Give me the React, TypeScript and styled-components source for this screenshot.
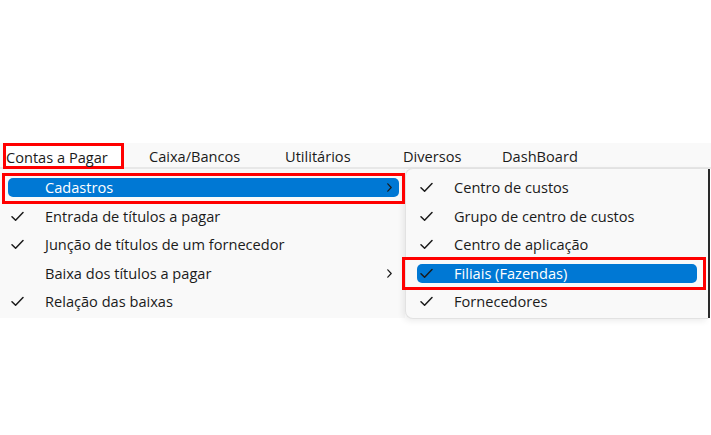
import React from 'react';
import styled, { createGlobalStyle } from 'styled-components';

const GlobalStyle = createGlobalStyle`
  html, body {
    margin: 0;
    padding: 0;
    background: #ffffff;
  }
  body {
    font-family: 'Open Sans', 'Noto Sans', 'Liberation Sans', sans-serif;
    font-size: 14.6px;
    color: #1b1b1b;
  }
`;

const Page = styled.div`
  width: 711px;
  height: 435px;
  padding-top: 143px;
  box-sizing: border-box;
  overflow: hidden;
`;

const MenuBar = styled.div`
  display: flex;
  align-items: stretch;
  height: 24px;
  padding-left: 3px;
  background: #f9f9f9;
  border-bottom: 2px solid #e8e8e8;
`;

const BarItem = styled.div<{ $w?: number; $pl?: number; $marked?: boolean }>`
  display: flex;
  align-items: center;
  box-sizing: border-box;
  width: ${(p) => (p.$w ? `${p.$w}px` : 'auto')};
  padding-left: ${(p) => p.$pl ?? 0}px;
  padding-top: 1px;
  height: ${(p) => (p.$marked ? '26px' : '24px')};
  border: ${(p) => (p.$marked ? '3px solid #ff0000' : 'none')};
  background: ${(p) => (p.$marked ? '#ffffff' : 'transparent')};
  white-space: nowrap;
  font-size: 14.6px;
`;

const DropRow = styled.div`
  display: flex;
  align-items: flex-start;
  border-right: 2px solid #2b2b2b;
  height: 149px;
  box-sizing: border-box;
  margin-right: 1px;
`;

const Menu = styled.div`
  display: flex;
  flex-direction: column;
  width: 405px;
  box-sizing: border-box;
  padding: 4.25px 6px 2px 8px;
  background: #f9f9f9;
`;

const SubMenu = styled.div`
  position: relative;
  z-index: 2;
  display: flex;
  flex-direction: column;
  width: 303px;
  margin-top: -1px;
  box-sizing: border-box;
  padding: 4.25px 11px 2px 11px;
  background: #f9f9f9;
  border: 1px solid #e2e2e2;
  border-right: none;
  border-radius: 8px 0 0 8px;
  box-shadow: -2px 2px 6px rgba(0, 0, 0, 0.08);
`;

const Item = styled.div<{ $active?: boolean }>`
  position: relative;
  display: flex;
  align-items: center;
  flex: none;
  height: 19px;
  margin: 4.75px 0;
  border-radius: 5px;
  background: ${(p) => (p.$active ? '#0078d4' : 'transparent')};
  color: ${(p) => (p.$active ? '#ffffff' : '#1b1b1b')};
  white-space: nowrap;
`;

const Mark = styled.span<{ $t: number; $r: number; $b: number; $l: number }>`
  position: absolute;
  top: ${(p) => p.$t}px;
  right: ${(p) => p.$r}px;
  bottom: ${(p) => p.$b}px;
  left: ${(p) => p.$l}px;
  border: 3px solid #ff0000;
  pointer-events: none;
  z-index: 3;
`;

const CheckSlot = styled.span`
  display: flex;
  align-items: center;
  width: 37px;
  padding-left: 3px;
  box-sizing: border-box;
  color: #1b1b1b;
`;

const Label = styled.span`
  flex: 1;
  line-height: 19px;
`;

const Chevron = styled.span`
  display: flex;
  align-items: center;
  padding-right: 7px;
`;

const Check = () => (
  <svg width="13" height="11" viewBox="0 0 13 11" fill="none">
    <path d="M1 5.8 L4.6 9.3 L12 1.6" stroke="currentColor" strokeWidth="1.5" strokeLinecap="round" strokeLinejoin="round" />
  </svg>
);

const Arrow = () => (
  <svg width="5" height="9" viewBox="0 0 5 9" fill="none">
    <path d="M0.8 0.8 L4.2 4.5 L0.8 8.2" stroke="#1b1b1b" strokeWidth="1.2" strokeLinecap="round" strokeLinejoin="round" />
  </svg>
);

type Entry = {
  label: string;
  checked?: boolean;
  sub?: boolean;
  active?: boolean;
  mark?: [number, number, number, number];
};

const mainItems: Entry[] = [
  { label: 'Cadastros', sub: true, active: true, mark: [-5, -6, -7, -6] },
  { label: 'Entrada de títulos a pagar', checked: true },
  { label: 'Junção de títulos de um fornecedor', checked: true },
  { label: 'Baixa dos títulos a pagar', sub: true },
  { label: 'Relação das baixas', checked: true },
];

const subItems: Entry[] = [
  { label: 'Centro de custos', checked: true },
  { label: 'Grupo de centro de custos', checked: true },
  { label: 'Centro de aplicação', checked: true },
  { label: 'Filiais (Fazendas)', checked: true, active: true, mark: [-7, -9, -7, -15] },
  { label: 'Fornecedores', checked: true },
];

const MenuEntry = ({ entry }: { entry: Entry }) => (
  <Item $active={entry.active}>
    {entry.mark && (
      <Mark $t={entry.mark[0]} $r={entry.mark[1]} $b={entry.mark[2]} $l={entry.mark[3]} />
    )}
    <CheckSlot>{entry.checked && <Check />}</CheckSlot>
    <Label>{entry.label}</Label>
    {entry.sub && (
      <Chevron>
        <Arrow />
      </Chevron>
    )}
  </Item>
);

const App: React.FC = () => {
  return (
    <Page>
      <GlobalStyle />
      <MenuBar>
        <BarItem $w={121} $marked>
          Contas a Pagar
        </BarItem>
        <BarItem $w={161} $pl={25}>
          Caixa/Bancos
        </BarItem>
        <BarItem $w={118}>Utilitários</BarItem>
        <BarItem $w={99}>Diversos</BarItem>
        <BarItem>DashBoard</BarItem>
      </MenuBar>
      <DropRow>
        <Menu>
          {mainItems.map((e) => (
            <MenuEntry key={e.label} entry={e} />
          ))}
        </Menu>
        <SubMenu>
          {subItems.map((e) => (
            <MenuEntry key={e.label} entry={e} />
          ))}
        </SubMenu>
      </DropRow>
    </Page>
  );
};

export default App;
